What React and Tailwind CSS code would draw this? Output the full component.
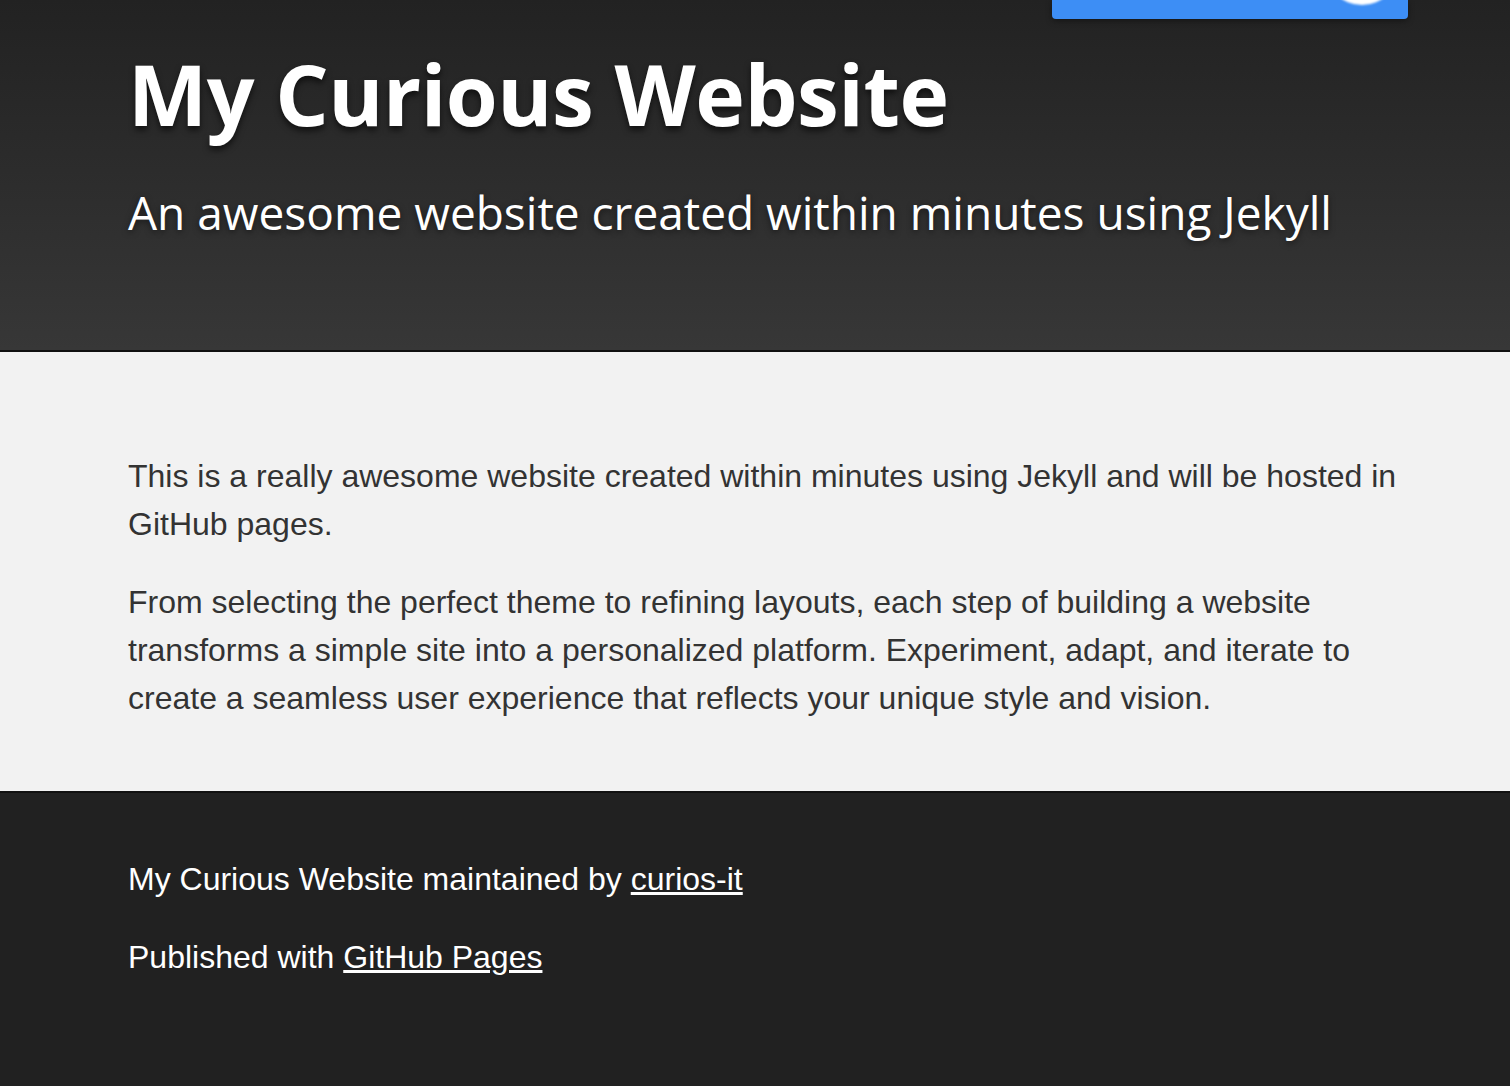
export default function App() {
  return (
    <div className="min-h-[1086px] bg-[#212121] font-['Liberation_Sans',Arial,sans-serif]">
      <header className="relative h-[352px] border-b-2 border-[#111111] bg-gradient-to-b from-[#222222] to-[#373737]">
        <div className="absolute right-[102px] top-0 h-[19px] w-[356px] overflow-hidden rounded-b-[4px] bg-[#3d8ef5] shadow-[0_2px_6px_rgba(0,0,0,0.4)]">
          <div className="absolute left-[273px] top-[-69px] h-[74px] w-[74px] rounded-full bg-white blur-[1px]" />
        </div>
        <div className="px-[128px] pt-[44px]">
          <h1 className="font-['Open_Sans',sans-serif] text-[84px] font-bold leading-[100px] tracking-[-0.5px] text-white [text-shadow:0_4px_6px_rgba(0,0,0,0.6)]">
            My Curious Website
          </h1>
          <h2 className="mt-[38px] font-['Open_Sans',sans-serif] text-[46px] font-normal leading-[60px] text-white [text-shadow:0_2px_6px_rgba(0,0,0,0.5)]">
            An awesome website created within minutes using Jekyll
          </h2>
        </div>
      </header>
      <main className="h-[441px] border-b-2 border-[#111111] bg-[#f2f2f2] pl-[128px] pr-[90px] pt-[100px] text-[32px] leading-[48px] text-[#333333]">
        <p>
          This is a really awesome website created within minutes using Jekyll and will be hosted in GitHub pages.
        </p>
        <p className="mt-[30px]">
          From selecting the perfect theme to refining layouts, each step of building a website transforms a simple site into a personalized platform. Experiment, adapt, and iterate to create a seamless user experience that reflects your unique style and vision.
        </p>
      </main>
      <footer className="px-[128px] pt-[62px] text-[32px] leading-[48px] text-white">
        <p>
          My Curious Website maintained by <a href="#" className="underline">curios-it</a>
        </p>
        <p className="mt-[30px]">
          Published with <a href="#" className="underline">GitHub Pages</a>
        </p>
      </footer>
    </div>
  );
}
